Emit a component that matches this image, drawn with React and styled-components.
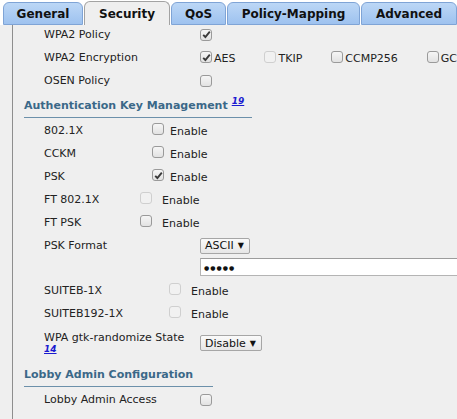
import React from 'react';
import styled, { createGlobalStyle } from 'styled-components';

const GlobalStyle = createGlobalStyle`
  html, body {
    margin: 0;
    height: 419px;
    overflow: hidden;
    background: #efefef;
    font-family: "DejaVu Sans", Verdana, sans-serif;
    font-size: 11px;
    color: #222;
  }
`;

const TabBar = styled.div`
  display: flex;
  align-items: flex-end;
  gap: 1px;
  height: 25px;
  padding-left: 3px;
  background: #fff;
`;

const Tab = styled.div`
  box-sizing: border-box;
  width: ${p => p.$w}px;
  height: ${p => (p.$active ? 24 : 23)}px;
  display: flex;
  align-items: center;
  justify-content: center;
  font-size: 12px;
  font-weight: bold;
  color: #111;
  border: 1px solid ${p => (p.$active ? '#a3a3a3' : '#7fa4d6')};
  border-bottom: ${p => (p.$active ? 'none' : '1px solid #7fa4d6')};
  border-radius: 6px 6px 0 0;
  background: ${p => (p.$active ? '#efefef' : 'linear-gradient(#bcd7f6, #9ec2ef)')};
  padding-top: ${p => (p.$active ? 1 : 0)}px;
`;

const Panel = styled.div`
  margin-left: 12px;
  border-left: 1px solid #8e8e8e;
  height: 394px;
  overflow: hidden;
`;

const Content = styled.div`
  margin-top: -2px;
  padding-left: 11px;
`;

const Row = styled.div`
  display: flex;
  align-items: center;
  height: ${p => p.$h || 23}px;
  padding-left: 20px;
  white-space: nowrap;
`;

const Label = styled.div`
  flex: none;
  width: ${p => p.$w || 156}px;
  line-height: 11px;
`;

const Heading = styled.div`
  width: ${p => p.$w}px;
  height: 13px;
  padding: 7px 0 5px;
  line-height: 13px;
  margin-bottom: 1px;
  border-bottom: 1px solid #6c90aa;
  font-weight: bold;
  color: #3b6888;
`;

const Note = styled.a`
  font-size: 9px;
  line-height: 9px;
  font-weight: bold;
  font-style: italic;
  color: #1a1ad0;
  text-decoration: underline;
  position: relative;
  top: ${p => (p.$sup ? -5 : 0)}px;
  margin-left: ${p => (p.$sup ? 4 : 0)}px;
`;

const Box = styled.span`
  box-sizing: border-box;
  flex: none;
  width: 12px;
  height: 12px;
  border-radius: 3px;
  border: 1px solid ${p => (p.$disabled ? '#cfcfcf' : '#9a9a9a')};
  background: ${p => (p.$disabled ? '#f1f1f1' : 'linear-gradient(#f6f6f6, #e2e2e2)')};
  display: inline-flex;
  align-items: center;
  justify-content: center;
  margin-bottom: ${p => p.$lift || 0}px;
`;

const Options = styled.div`
  display: flex;
  align-items: center;
  gap: 29px;
`;

const Option = styled.label`
  display: flex;
  align-items: center;
  gap: 2px;
  padding-top: 2px;
`;

const EnableText = styled.span`
  margin-left: ${p => p.$gap}px;
  padding-top: 2px;
`;

const Select = styled.div`
  box-sizing: border-box;
  height: 16px;
  padding: 0 5px 0 4px;
  display: inline-flex;
  align-items: center;
  gap: 4px;
  border: 1px solid #a6a6a6;
  border-radius: 2px;
  background: linear-gradient(#fafafa, #e6e6e6);
  font-size: 11px;
  color: #111;

  span {
    font-size: 8px;
  }
`;

const Input = styled.div`
  box-sizing: border-box;
  flex: none;
  width: 300px;
  height: 18px;
  margin-top: -2px;
  padding-left: 3px;
  display: flex;
  align-items: center;
  background: #fff;
  border: 1px solid #b4b4b4;
  border-top-color: #9c9c9c;
  font-size: 6px;
  letter-spacing: 1px;
  color: #111;
`;

const Check = ({ checked, disabled, lift }) => (
  <Box $disabled={disabled} $lift={lift}>
    {checked && (
      <svg width="9" height="9" viewBox="0 0 9 9">
        <path d="M1.2 4.8 L3.4 7 L7.8 1.6" fill="none" stroke="#3a3a3a" strokeWidth="1.9" />
      </svg>
    )}
  </Box>
);

const EnableRow = ({ label, w, gap, checked, disabled }) => (
  <Row>
    <Label $w={w}>{label}</Label>
    <Check checked={checked} disabled={disabled} lift={3} />
    <EnableText $gap={gap}>Enable</EnableText>
  </Row>
);

const tabs = [
  { name: 'General', w: 80 },
  { name: 'Security', w: 86, active: true },
  { name: 'QoS', w: 55 },
  { name: 'Policy-Mapping', w: 133 },
  { name: 'Advanced', w: 96 },
];

export default function App() {
  return (
    <>
      <GlobalStyle />
      <TabBar>
        {tabs.map(t => (
          <Tab key={t.name} $w={t.w} $active={t.active}>{t.name}</Tab>
        ))}
      </TabBar>
      <Panel>
        <Content>
          <Row>
            <Label>WPA2 Policy</Label>
            <Check checked />
          </Row>
          <Row>
            <Label>WPA2 Encryption</Label>
            <Options>
              <Option><Check checked lift={3} />AES</Option>
              <Option><Check disabled lift={3} />TKIP</Option>
              <Option><Check lift={3} />CCMP256</Option>
              <Option><Check lift={3} />GCMP128</Option>
            </Options>
          </Row>
          <Row>
            <Label>OSEN Policy</Label>
            <Check />
          </Row>

          <Heading $w={228}>
            Authentication Key Management<Note $sup href="#">19</Note>
          </Heading>
          <EnableRow label="802.1X" w={108} gap={6} />
          <EnableRow label="CCKM" w={108} gap={6} />
          <EnableRow label="PSK" w={108} gap={6} checked />
          <EnableRow label="FT 802.1X" w={96} gap={10} disabled />
          <EnableRow label="FT PSK" w={96} gap={10} />
          <Row>
            <Label>PSK Format</Label>
            <Select>ASCII<span>▼</span></Select>
          </Row>
          <Row $h={22}>
            <Label />
            <Input>●●●●●</Input>
          </Row>
          <EnableRow label="SUITEB-1X" w={125} gap={10} disabled />
          <EnableRow label="SUITEB192-1X" w={125} gap={10} disabled />
          <Row $h={36}>
            <Label>
              WPA gtk-randomize State
              <br />
              <Note href="#">14</Note>
            </Label>
            <Select>Disable<span>▼</span></Select>
          </Row>

          <Heading $w={189}>Lobby Admin Configuration</Heading>
          <Row>
            <Label>Lobby Admin Access</Label>
            <Check />
          </Row>
        </Content>
      </Panel>
    </>
  );
}
